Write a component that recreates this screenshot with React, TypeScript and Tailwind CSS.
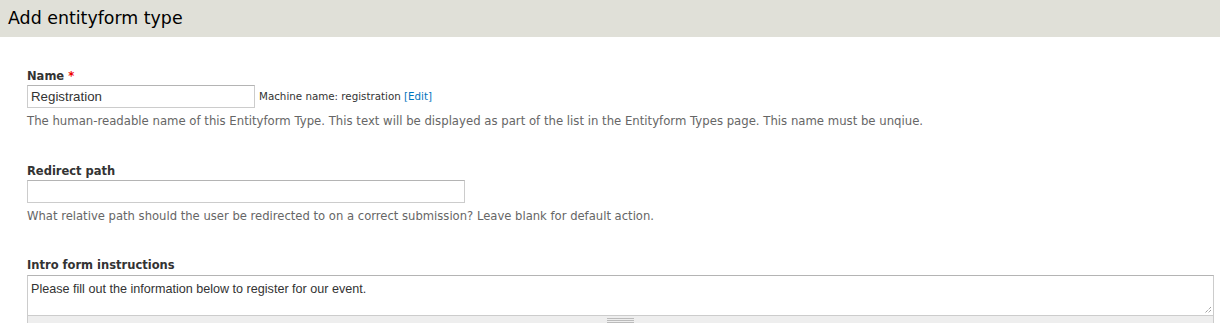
export default function App() {
  const sans = { fontFamily: '"DejaVu Sans", Verdana, sans-serif' };
  const arial = { fontFamily: '"Liberation Sans", Arial, sans-serif' };
  return (
    <div className="min-h-[323px] bg-white overflow-hidden" style={sans}>
      {/* Page title */}
      <div className="h-[37px] bg-[#e0e0d8] pl-[8px] flex items-center">
        <h1 className="text-[17.4px] font-normal text-black leading-none">
          Add entityform type
        </h1>
      </div>

      <div className="pl-[27px] pr-[6px] pt-[31px]">
        {/* Name */}
        <div>
          <label className="block text-[11.5px] font-bold text-[#333] leading-[16px]">
            Name <span className="text-[#e00]">*</span>
          </label>
          <div className="flex items-center mt-[1px]">
            <input
              className="w-[228px] h-[23px] border border-[#ccc] border-t-[#b4b4b4] px-[3px] text-[13.3px] text-[#333] outline-none"
              style={arial}
              defaultValue="Registration"
            />
            <span className="ml-[4px] text-[10.3px] text-[#333]">
              Machine name: registration{" "}
              <a className="text-[#0074bd]">[Edit]</a>
            </span>
          </div>
          <p className="mt-[6px] text-[11.7px] text-[#666] leading-[14px]">
            The human-readable name of this Entityform Type. This text will be
            displayed as part of the list in the Entityform Types page. This
            name must be unqiue.
          </p>
        </div>

        {/* Redirect path */}
        <div className="mt-[35px]">
          <label className="block text-[11.5px] font-bold text-[#333] leading-[16px]">
            Redirect path
          </label>
          <input
            className="mt-[1px] w-[438px] h-[23px] border border-[#ccc] border-t-[#b4b4b4] px-[3px] text-[13px] outline-none block"
            style={arial}
          />
          <p className="mt-[6px] text-[11.6px] text-[#666] leading-[14px]">
            What relative path should the user be redirected to on a correct
            submission? Leave blank for default action.
          </p>
        </div>

        {/* Intro form instructions */}
        <div className="mt-[34px]">
          <label className="block text-[11.5px] font-bold text-[#333] leading-[16px]">
            Intro form instructions
          </label>
          <div className="relative mt-[2px]">
            <textarea
              className="block w-full h-[40px] border border-[#ccc] border-t-[#b4b4b4] border-b-0 px-[3px] pt-[6px] text-[12.6px] leading-[15px] text-[#333] outline-none resize-none"
              style={arial}
              defaultValue="Please fill out the information below to register for our event."
            />
            <svg
              className="absolute right-[2px] top-[31px]"
              width="8"
              height="8"
              viewBox="0 0 8 8"
            >
              <path d="M7 1 L1 7 M7 4 L4 7" stroke="#777" strokeWidth="1" strokeDasharray="1 1" />
            </svg>
            <div className="h-[9px] bg-[#eee] border border-[#ccc] flex justify-center pt-[2px]">
              <div className="w-[27px] h-[5px] border-y border-[#bbb] flex items-center">
                <div className="w-full h-px bg-[#bbb]" />
              </div>
            </div>
          </div>
        </div>
      </div>
    </div>
  );
}
